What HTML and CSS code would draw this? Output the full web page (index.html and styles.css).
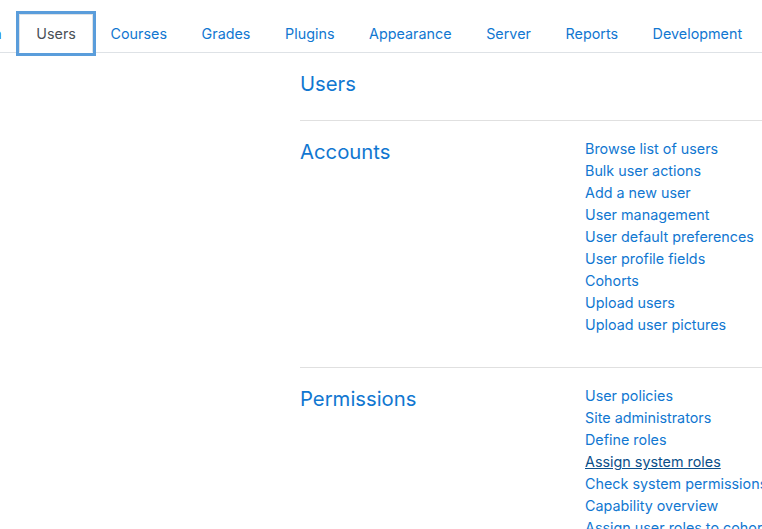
FILE: index.html
```html
<!DOCTYPE html>
<html>
<head>
	<title>Site administration: Users</title>
<link rel="stylesheet" href="styles.css">
</head>
<body>
<ul class="tabs">
	<li><a class="tab" href="#">Site administration</a></li>
	<li><a class="tab active" href="#">Users</a></li>
	<li><a class="tab" href="#">Courses</a></li>
	<li><a class="tab" href="#">Grades</a></li>
	<li><a class="tab" href="#">Plugins</a></li>
	<li><a class="tab" href="#">Appearance</a></li>
	<li><a class="tab" href="#">Server</a></li>
	<li><a class="tab" href="#">Reports</a></li>
	<li><a class="tab" href="#">Development</a></li>
</ul>
<div class="main">
	<h2 class="title"><a href="#">Users</a></h2>
	<hr>
	<div class="row">
		<h3 class="cat"><a href="#">Accounts</a></h3>
		<ul class="links">
			<li><a href="#">Browse list of users</a></li>
			<li><a href="#">Bulk user actions</a></li>
			<li><a href="#">Add a new user</a></li>
			<li><a href="#">User management</a></li>
			<li><a href="#">User default preferences</a></li>
			<li><a href="#">User profile fields</a></li>
			<li><a href="#">Cohorts</a></li>
			<li><a href="#">Upload users</a></li>
			<li><a href="#">Upload user pictures</a></li>
		</ul>
	</div>
	<hr>
	<div class="row">
		<h3 class="cat"><a href="#">Permissions</a></h3>
		<ul class="links">
			<li><a href="#">User policies</a></li>
			<li><a href="#">Site administrators</a></li>
			<li><a href="#">Define roles</a></li>
			<li><a class="hover" href="#">Assign system roles</a></li>
			<li><a href="#">Check system permissions</a></li>
			<li><a href="#">Capability overview</a></li>
			<li><a href="#">Assign user roles to cohort</a></li>
			<li><a href="#">Unsupported role assignments</a></li>
		</ul>
	</div>
</div>
</body>
</html>
```
FILE: styles.css
```css
*{margin: 0;padding: 0;box-sizing: border-box;}
html,body{overflow: hidden;}
body{
	width: 762px;
	height: 529px;
	background: #fff;
	font-family: Inter, "Liberation Sans", sans-serif;
	font-size: 14.35px;
	line-height: 22px;
	color: #373a3c;
}
ul{list-style: none;}
a{color: #1177d1;text-decoration: none;}

.tabs{
	display: flex;
	white-space: nowrap;
	margin-top: 14px;
	margin-left: -141px;
	width: 1000px;
	border-bottom: 1px solid #dee2e6;
}
.tabs li{margin-bottom: -1px;}
.tab{
	display: block;
	padding: 8px 16.3px 7px;
	border: 1px solid transparent;
}
.tab.active{
	color: #495057;
	border-color: #dee2e6 #dee2e6 #fff;
	box-shadow: 0 0 0 3px #5a9ddb;
}

.main{margin-left: 300px;width: 1200px;}
.title{
	font-size: 20.3px;
	font-weight: 400;
	line-height: 27px;
	margin-top: 17px;
	margin-bottom: 23px;
}
hr{border: 0;border-top: 1px solid #e0e0e0;}
.row{display: flex;padding-top: 17px;padding-bottom: 31px;}
.cat{
	width: 285px;
	font-size: 20.3px;
	font-weight: 400;
	line-height: 27px;
}
.links a.hover{color: #0b4f8a;text-decoration: underline;}
```
